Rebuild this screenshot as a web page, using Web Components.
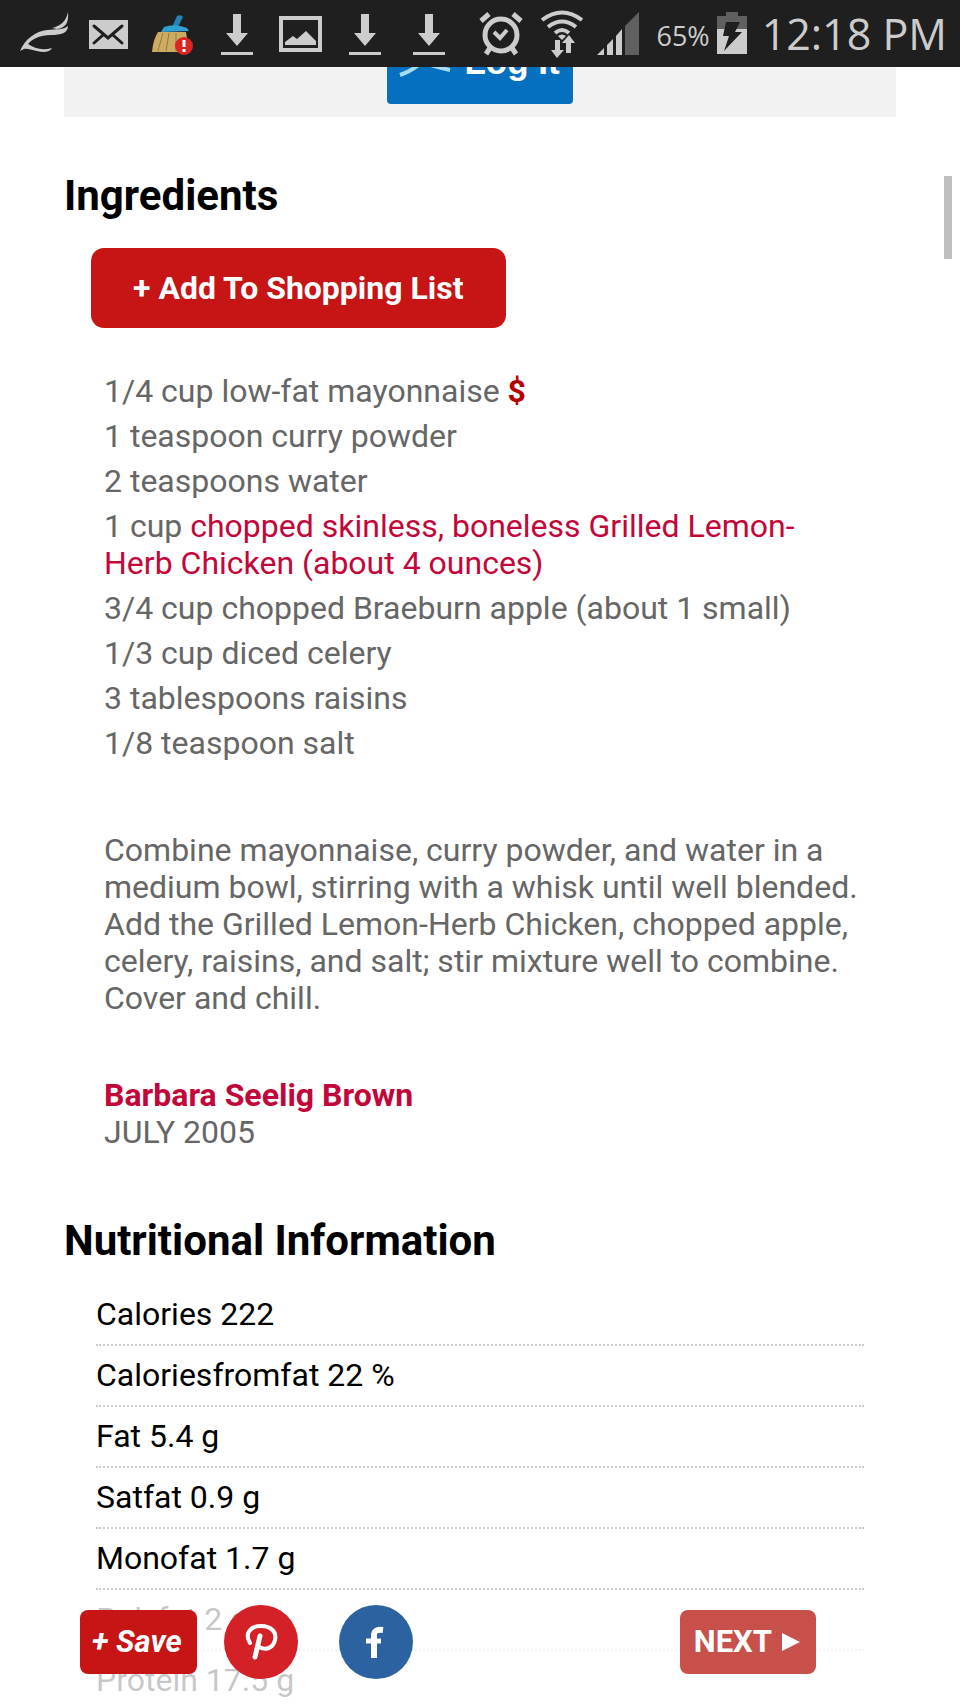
<!DOCTYPE html>
<html lang="en">
<head>
<meta charset="utf-8">
<meta name="viewport" content="width=device-width, initial-scale=1">
<title>Recipe</title>
<style>
    body {
        margin: 0;
        background: #fff;
        color: #000;
        font: 32px/37px Roboto, "Liberation Sans", sans-serif;
    }
    a {
        color: #c3063a;
        text-decoration: none;
    }
</style>
</head>
<body>
<phone-screen>
    <status-bar slot="status" battery="65%" time="12:18 PM"></status-bar>
    <log-panel>Log It</log-panel>
    <recipe-section heading="Ingredients">
        <shopping-button>+ Add To Shopping List</shopping-button>
        <ingredient-list>
            <ingredient-item sale>1/4 cup low-fat mayonnaise</ingredient-item>
            <ingredient-item>1 teaspoon curry powder</ingredient-item>
            <ingredient-item>2 teaspoons water</ingredient-item>
            <ingredient-item>1 cup <a href="#chicken">chopped skinless, boneless Grilled Lemon-Herb Chicken (about 4 ounces)</a></ingredient-item>
            <ingredient-item>3/4 cup chopped Braeburn apple (about 1 small)</ingredient-item>
            <ingredient-item>1/3 cup diced celery</ingredient-item>
            <ingredient-item>3 tablespoons raisins</ingredient-item>
            <ingredient-item>1/8 teaspoon salt</ingredient-item>
        </ingredient-list>
        <recipe-steps>
            Combine mayonnaise, curry powder, and water in a medium bowl, stirring with a whisk until well blended. Add the Grilled Lemon-Herb Chicken, chopped apple, celery, raisins, and salt; stir mixture well to combine. Cover and chill.
        </recipe-steps>
        <recipe-credit date="JULY 2005"><a href="#author">Barbara Seelig Brown</a></recipe-credit>
    </recipe-section>
    <recipe-section heading="Nutritional Information">
        <nutrition-facts></nutrition-facts>
    </recipe-section>
    <share-bar slot="footer"></share-bar>
</phone-screen>

<script>
class PhoneScreen extends HTMLElement {
    constructor() {
        super();
        this.attachShadow({ mode: 'open' });
        this.shadowRoot.innerHTML = `
            <style>
                :host {
                    display: flex;
                    flex-direction: column;
                    height: 100vh;
                    overflow: hidden;
                    position: relative;
                }
                main {
                    flex: 1;
                    min-height: 0;
                    overflow: hidden;
                    padding: 0 64px;
                }
                .scrollbar {
                    position: absolute;
                    top: 176px;
                    right: 8px;
                    width: 8px;
                    height: 83px;
                    background: #bebebe;
                }
                .footer {
                    position: absolute;
                    left: 0;
                    right: 0;
                    bottom: 0;
                }
            </style>
            <slot name="status"></slot>
            <main><slot></slot></main>
            <div class="scrollbar"></div>
            <div class="footer"><slot name="footer"></slot></div>
        `;
    }
}

const download = x => `
    <svg viewBox="${x} 0 64 67">
        <path fill="#ccc" d="M${x + 28} 14h8v19h7l-11 13-11-13h7zM${x + 16} 52h32v3H${x + 16}z"/>
    </svg>`;

class StatusBar extends HTMLElement {
    constructor() {
        super();
        this.attachShadow({ mode: 'open' });
        this.shadowRoot.innerHTML = `
            <style>
                :host {
                    display: flex;
                    flex: none;
                    justify-content: space-between;
                    height: 67px;
                    padding: 0 13px;
                    background: #1f1f1f;
                    color: #ccc;
                    font-family: "Open Sans", "Noto Sans", sans-serif;
                }
                div {
                    display: flex;
                    align-items: center;
                }
                svg { height: 67px; width: 64px; }
                .system svg { width: 60px; }
                .system .battery { width: 30px; }
                .level { font-size: 27px; margin: 4px 7px 0 6px; }
                .time { font-size: 43px; margin-left: 15px; white-space: nowrap; }
            </style>
            <div class="notifications">
                <svg viewBox="13 0 64 67" fill="#ccc">
                    <path d="M52 28C60 26 66 22 68 12C69 22 66 28 57 29Z"/>
                    <path d="M20 51C25 39 36 31 47 30C57 29 63 30 68 26C68 33 61 35 51 35C40 35 32 39 28 44C34 48 42 51 52 48C50 52 44 53 37 51C31 50 27 48 24 49Z"/>
                </svg>
                <svg viewBox="77 0 64 67">
                    <path fill="#ccc" d="M89 20h39v29H89z"/>
                    <path fill="none" stroke="#1f1f1f" stroke-width="3" stroke-linecap="round" d="M94 26l14 12 14-12M94 43l9-8M122 43l-9-8"/>
                </svg>
                <svg viewBox="141 0 64 67">
                    <path fill="#2384b4" d="M177 16q4-2 6 1l-5 10h-6z"/>
                    <path fill="#2fa0cf" d="M164 27q11-4 23 1l2 3-28 1z"/>
                    <path fill="#ccac62" d="M158 32h28l3 20H152Q153 40 158 32z"/>
                    <path stroke="#987a3c" fill="none" d="M163 33l-5 18M169 33l-3 18M176 33v18"/>
                    <circle cx="184" cy="46" r="9" fill="#da2522"/>
                    <path stroke="#fff" stroke-width="3" d="M184 40v7M184 49v3"/>
                </svg>
                ${download(205)}
                <svg viewBox="269 0 64 67">
                    <path fill="none" stroke="#ccc" stroke-width="4" d="M281 18h39v32h-39z"/>
                    <path fill="#ccc" d="M285 45v-3l8-6 4 3 9-8 10 10v4z"/>
                </svg>
                ${download(333)}
                ${download(397)}
            </div>
            <div class="system">
                <svg viewBox="469 0 60 67" fill="none" stroke="#ccc">
                    <circle cx="500" cy="35" r="16" stroke-width="5"/>
                    <path stroke-width="5" d="M480 21l8-7M520 21l-8-7"/>
                    <path stroke-width="4" d="M493 32l6 6 7-8"/>
                    <path stroke-width="5" d="M489 48l-4 6M511 48l4 6"/>
                </svg>
                <svg viewBox="529 0 60 67" fill="none" stroke="#ccc" stroke-width="4">
                    <path d="M541 20q20-15 40 0M547 27q14-11 28 0M554 33q7-6 14 0"/>
                    <path fill="#ccc" stroke="none" d="M557 36q4-3 8 0l-4 4zM554 40h5v10h4l-7 8-6-8h4zM565 53V43h-4l7-8 6 8h-4v10z"/>
                </svg>
                <svg viewBox="589 0 60 67">
                    <path fill="#ccc" d="M596 55l7-7v7zM606 55V45l6-6v16zM615 55V36l6-7v26z"/>
                    <path fill="#606060" d="M624 55V26l14-14v43z"/>
                </svg>
                <span class="level">${this.getAttribute('battery')}</span>
                <svg class="battery" viewBox="717 0 30 67">
                    <path fill="#606060" d="M717 16h9v-4h12v4h9v13h-30z"/>
                    <path fill="#ccc" d="M717 29h30v25h-30z"/>
                    <path fill="#1f1f1f" d="M726 22h14l-5 10h7l-18 19 5-15h-6z"/>
                </svg>
                <span class="time">${this.getAttribute('time')}</span>
            </div>
        `;
    }
}

class LogPanel extends HTMLElement {
    constructor() {
        super();
        this.attachShadow({ mode: 'open' });
        this.shadowRoot.innerHTML = `
            <style>
                :host {
                    display: flex;
                    justify-content: center;
                    align-items: flex-end;
                    height: 50px;
                    padding-bottom: 13px;
                    margin-bottom: 54px;
                    box-sizing: border-box;
                    overflow: hidden;
                    background: #f2f2f2;
                }
                button {
                    display: flex;
                    flex: none;
                    align-items: center;
                    gap: 12px;
                    height: 84px;
                    padding: 0 13px 0 11px;
                    border: 0;
                    border-radius: 4px;
                    background: #0470bf;
                    color: #fff;
                    font: bold 35px/40px "Liberation Sans", sans-serif;
                    white-space: nowrap;
                }
            </style>
            <button type="button">
                <svg width="54" height="44" viewBox="0 0 54 44" fill="none" stroke="#a8dcf5" stroke-width="4">
                    <path d="M2 35Q14 31 24 22Q34 26 52 30"/>
                    <circle cx="28" cy="9" r="5"/>
                </svg>
                <slot></slot>
            </button>
        `;
    }
}

class RecipeSection extends HTMLElement {
    constructor() {
        super();
        this.attachShadow({ mode: 'open' });
        this.shadowRoot.innerHTML = `
            <style>
                :host {
                    display: block;
                    margin-bottom: 65px;
                }
                h2 {
                    margin: 0;
                    font-size: 42px;
                    line-height: 50px;
                }
            </style>
            <h2>${this.getAttribute('heading')}</h2>
            <slot></slot>
        `;
    }
}

class ShoppingButton extends HTMLElement {
    constructor() {
        super();
        this.attachShadow({ mode: 'open' });
        this.shadowRoot.innerHTML = `
            <style>
                :host {
                    display: block;
                    padding: 27px 27px 45px;
                }
                button {
                    height: 80px;
                    padding: 0 42px;
                    border: 0;
                    border-radius: 13px;
                    background: #c71414;
                    color: #fff;
                    font: bold 32px/37px Roboto, sans-serif;
                    display: block;
                }
            </style>
            <button type="button"><slot></slot></button>
        `;
    }
}

class IngredientList extends HTMLElement {
    constructor() {
        super();
        this.attachShadow({ mode: 'open' });
        this.shadowRoot.innerHTML = `
            <style>
                :host {
                    display: flex;
                    flex-direction: column;
                    gap: 8px;
                    padding: 0 40px 0 40px;
                    color: #666;
                }
            </style>
            <slot></slot>
        `;
        this.setAttribute('role', 'list');
    }
}

class IngredientItem extends HTMLElement {
    constructor() {
        super();
        this.attachShadow({ mode: 'open' });
        this.shadowRoot.innerHTML = `
            <style>
                :host { display: block; }
                b { color: #b30000; }
            </style>
            <slot></slot>${this.hasAttribute('sale') ? ' <b>$</b>' : ''}
        `;
        this.setAttribute('role', 'listitem');
    }
}

class RecipeSteps extends HTMLElement {
    constructor() {
        super();
        this.attachShadow({ mode: 'open' });
        this.shadowRoot.innerHTML = `
            <style>
                :host {
                    display: block;
                    padding: 70px 32px 60px 40px;
                    color: #666;
                }
                p { margin: 0; }
            </style>
            <p><slot></slot></p>
        `;
    }
}

class RecipeCredit extends HTMLElement {
    constructor() {
        super();
        this.attachShadow({ mode: 'open' });
        this.shadowRoot.innerHTML = `
            <style>
                :host {
                    display: block;
                    padding: 0 32px 0 40px;
                    color: #666;
                }
                .author { font-weight: bold; }
            </style>
            <div class="author"><slot></slot></div>
            <div>${this.getAttribute('date')}</div>
        `;
    }
}

class NutritionFacts extends HTMLElement {
    constructor() {
        super();
        this.attachShadow({ mode: 'open' });
        this.facts = [
            { name: 'Calories', amount: '222' },
            { name: 'Caloriesfromfat', amount: '22 %' },
            { name: 'Fat', amount: '5.4 g' },
            { name: 'Satfat', amount: '0.9 g' },
            { name: 'Monofat', amount: '1.7 g' },
            { name: 'Polyfat', amount: '2 g' },
            { name: 'Protein', amount: '17.5 g' },
        ];

        this.shadowRoot.innerHTML = `
            <style>
                :host {
                    display: block;
                    padding: 19px 32px 0;
                }
                ul {
                    margin: 0;
                    padding: 0;
                    list-style: none;
                }
                li {
                    padding: 11px 0;
                    border-bottom: 2px dotted #ccc;
                }
            </style>
            <ul></ul>
        `;

        this.list = this.shadowRoot.querySelector('ul');
        this.renderFacts();
    }

    renderFacts() {
        this.facts.forEach(fact => {
            const li = document.createElement('li');
            li.textContent = `${fact.name} ${fact.amount}`;
            this.list.appendChild(li);
        });
    }
}

class ShareBar extends HTMLElement {
    constructor() {
        super();
        this.attachShadow({ mode: 'open' });
        this.shadowRoot.innerHTML = `
            <style>
                :host {
                    display: flex;
                    align-items: center;
                    height: 106px;
                    padding: 0 144px 22px 80px;
                    box-sizing: border-box;
                    background: rgba(255, 255, 255, .78);
                }
                button {
                    height: 64px;
                    border: 0;
                    border-radius: 8px;
                    color: #fff;
                    font: bold 31px/36px Roboto, sans-serif;
                    white-space: nowrap;
                }
                .save {
                    padding: 0 15px 0 12px;
                    background: #c71414;
                    font-style: italic;
                }
                .next {
                    display: flex;
                    align-items: center;
                    gap: 10px;
                    margin-left: auto;
                    padding: 0 16px 0 14px;
                    background: #c7504b;
                }
                .social {
                    display: block;
                    width: 75px;
                    height: 75px;
                }
                .pinterest { margin: 0 40px 0 27px; }
            </style>
            <button class="save" type="button">+ Save</button>
            <a class="social pinterest" href="#pinterest" aria-label="Pinterest">
                <svg width="75" height="75" viewBox="0 0 75 75" fill="none" stroke="#fff" stroke-linecap="round">
                    <circle cx="37" cy="37" r="37" fill="#d42027" stroke="none"/>
                    <path stroke-width="4" d="M26 38C20 28 27 21 37 21C47 21 53 27 51 35C49 44 40 46 34 41"/>
                    <path stroke-width="5" d="M36 31L31 52"/>
                </svg>
            </a>
            <a class="social" href="#facebook" aria-label="Facebook">
                <svg width="75" height="75" viewBox="0 0 75 75" fill="none" stroke="#fff">
                    <circle cx="37" cy="37" r="37" fill="#2b629f" stroke="none"/>
                    <path stroke-width="6" d="M35 53V30Q35 24 44 25"/>
                    <path stroke-width="5" d="M27 36h15"/>
                </svg>
            </a>
            <button class="next" type="button">NEXT
                <svg width="18" height="20" viewBox="0 0 18 20"><path fill="#fff" d="M0 1l18 9-18 9z"/></svg>
            </button>
        `;
    }
}

customElements.define('phone-screen', PhoneScreen);
customElements.define('status-bar', StatusBar);
customElements.define('log-panel', LogPanel);
customElements.define('recipe-section', RecipeSection);
customElements.define('shopping-button', ShoppingButton);
customElements.define('ingredient-list', IngredientList);
customElements.define('ingredient-item', IngredientItem);
customElements.define('recipe-steps', RecipeSteps);
customElements.define('recipe-credit', RecipeCredit);
customElements.define('nutrition-facts', NutritionFacts);
customElements.define('share-bar', ShareBar);
</script>
</body>
</html>
